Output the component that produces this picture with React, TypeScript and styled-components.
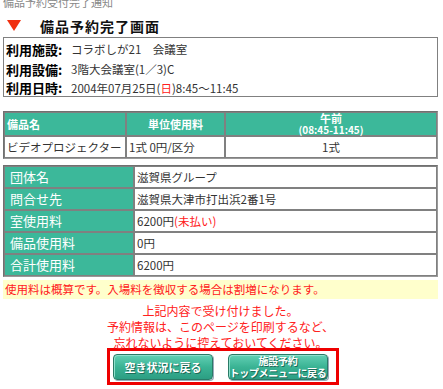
import styled, { createGlobalStyle } from 'styled-components';

const GlobalStyle = createGlobalStyle`
  body {
    margin: 0;
    background: #fff;
    font-family: "Noto Sans CJK JP", "Noto Sans", sans-serif;
    font-size: 12px;
    color: #333;
  }
`;

const Page = styled.div`
  width: 435px;
  padding: 0 3px;
  overflow: hidden;
  height: 389px;
`;

const Crumb = styled.div`
  color: #888;
  font-size: 11px;
  line-height: 12px;
  height: 12px;
  margin-top: -4px;
`;

const Title = styled.h1`
  display: flex;
  align-items: center;
  margin: 6px 0 0 4px;
  height: 23px;
  font-size: 14px;
  font-weight: bold;
  color: #111;
  letter-spacing: 1px;
  line-height: 20px;
`;

const Arrow = styled.span`
  display: inline-block;
  width: 0;
  height: 0;
  border-left: 7px solid transparent;
  border-right: 7px solid transparent;
  border-top: 11px solid #f03010;
  margin-right: 19px;
`;

const InfoBox = styled.div`
  border: 1px solid #808080;
  padding: 1px 0 0 2px;
  height: 57px;
`;

const InfoRow = styled.div<{ $h: number }>`
  display: flex;
  align-items: center;
  height: ${({ $h }) => $h}px;
`;

const InfoLabel = styled.span`
  font-weight: bold;
  font-size: 13px;
  color: #000;
  width: 65px;
  flex-shrink: 0;
`;

const InfoValue = styled.span`
  font-size: 11.5px;
  color: #333;
`;

const Red = styled.span`
  color: #ff2020;
`;

const Table = styled.table<{ $mt: number }>`
  width: 100%;
  border-collapse: separate;
  border-spacing: 0;
  border: 1px solid #707070;
  border-right-color: #999;
  border-bottom-color: #999;
  margin-top: ${({ $mt }) => $mt}px;
  table-layout: fixed;

  td, th {
    border: 1px solid #808080;
    padding: 0 2px;
    font-size: 11.5px;
    line-height: 12px;
    white-space: nowrap;
  }
`;

const Head = styled.th<{ $center?: boolean }>`
  background: #3cb89a;
  color: #fff;
  font-weight: bold;
  text-align: ${({ $center }) => ($center ? 'center' : 'left')};
  height: 22px;
  && {
    font-size: 11px;
    line-height: 11px;
  }
`;

const SubHead = styled.span`
  display: block;
  font-size: 10px;
  line-height: 11px;
`;

const Cell = styled.td<{ $center?: boolean }>`
  background: #fff;
  color: #333;
  text-align: ${({ $center }) => ($center ? 'center' : 'left')};
  height: 20px;
`;

const LabelCell = styled.td`
  background: #3cb89a;
  color: #fff;
  height: 20px;
  && {
    font-size: 13px;
    padding-left: 5px;
  }
`;

const Notice = styled.div`
  background: #ffffcc;
  color: #ff2020;
  margin-top: 3px;
  height: 19px;
  line-height: 19px;
  padding-left: 2px;
  font-size: 11.5px;
`;

const Message = styled.div`
  text-align: center;
  color: #ff2020;
  line-height: 16px;
  height: 45px;
  margin-top: 4px;
  font-size: 12px;
`;

const ButtonFrame = styled.div`
  display: flex;
  gap: 15px;
  width: 220px;
  height: 31px;
  margin: 0 0 0 104px;
  padding: 0 3px;
  border: 3px solid #ee0000;
  align-items: center;
`;

const Button = styled.button<{ $small?: boolean }>`
  width: 100px;
  height: 26px;
  border: 1px solid #2a7a66;
  border-radius: 4px;
  background: linear-gradient(#62d0b4, #3ab394 50%, #2c9e83);
  box-shadow: inset 1px 1px 0 #8fe0cc, 1px 1px 0 #9ab;
  color: #fff;
  font-family: "Noto Sans CJK JP", sans-serif;
  font-weight: bold;
  font-size: ${({ $small }) => ($small ? 10 : 11)}px;
  line-height: 12px;
  letter-spacing: ${({ $small }) => ($small ? '-0.3px' : '0')};
  text-shadow: 1px 1px 0 #1d6b58;
  padding: 0;
  white-space: nowrap;
  cursor: pointer;
`;

export default function App() {
  return (
    <Page>
      <GlobalStyle />
      <Crumb>備品予約受付完了通知</Crumb>
      <Title>
        <Arrow />
        備品予約完了画面
      </Title>
      <InfoBox>
        <InfoRow $h={20}>
          <InfoLabel>利用施設:</InfoLabel>
          <InfoValue>コラボしが21　会議室</InfoValue>
        </InfoRow>
        <InfoRow $h={20}>
          <InfoLabel>利用設備:</InfoLabel>
          <InfoValue>3階大会議室(1／3)C</InfoValue>
        </InfoRow>
        <InfoRow $h={17}>
          <InfoLabel>利用日時:</InfoLabel>
          <InfoValue>
            2004年07月25日(<Red>日</Red>)8:45～11:45
          </InfoValue>
        </InfoRow>
      </InfoBox>

      <Table $mt={14}>
        <colgroup>
          <col style={{ width: 122 }} />
          <col style={{ width: 99 }} />
          <col />
        </colgroup>
        <thead>
          <tr>
            <Head>備品名</Head>
            <Head $center>単位使用料</Head>
            <Head $center>
              午前
              <SubHead>(08:45-11:45)</SubHead>
            </Head>
          </tr>
        </thead>
        <tbody>
          <tr>
            <Cell>ビデオプロジェクター</Cell>
            <Cell>1式 0円/区分</Cell>
            <Cell $center>1式</Cell>
          </tr>
        </tbody>
      </Table>

      <Table $mt={6}>
        <colgroup>
          <col style={{ width: 130 }} />
          <col />
        </colgroup>
        <tbody>
          <tr>
            <LabelCell>団体名</LabelCell>
            <Cell>滋賀県グループ</Cell>
          </tr>
          <tr>
            <LabelCell>問合せ先</LabelCell>
            <Cell>滋賀県大津市打出浜2番1号</Cell>
          </tr>
          <tr>
            <LabelCell>室使用料</LabelCell>
            <Cell>
              6200円<Red>(未払い)</Red>
            </Cell>
          </tr>
          <tr>
            <LabelCell>備品使用料</LabelCell>
            <Cell>0円</Cell>
          </tr>
          <tr>
            <LabelCell>合計使用料</LabelCell>
            <Cell>6200円</Cell>
          </tr>
        </tbody>
      </Table>

      <Notice>使用料は概算です。入場料を徴収する場合は割増になります。</Notice>

      <Message>
        上記内容で受け付けました。
        <br />
        予約情報は、このページを印刷するなど、
        <br />
        忘れないように控えておいてください。
      </Message>

      <ButtonFrame>
        <Button>空き状況に戻る</Button>
        <Button $small>
          施設予約
          <br />
          トップメニューに戻る
        </Button>
      </ButtonFrame>
    </Page>
  );
}
